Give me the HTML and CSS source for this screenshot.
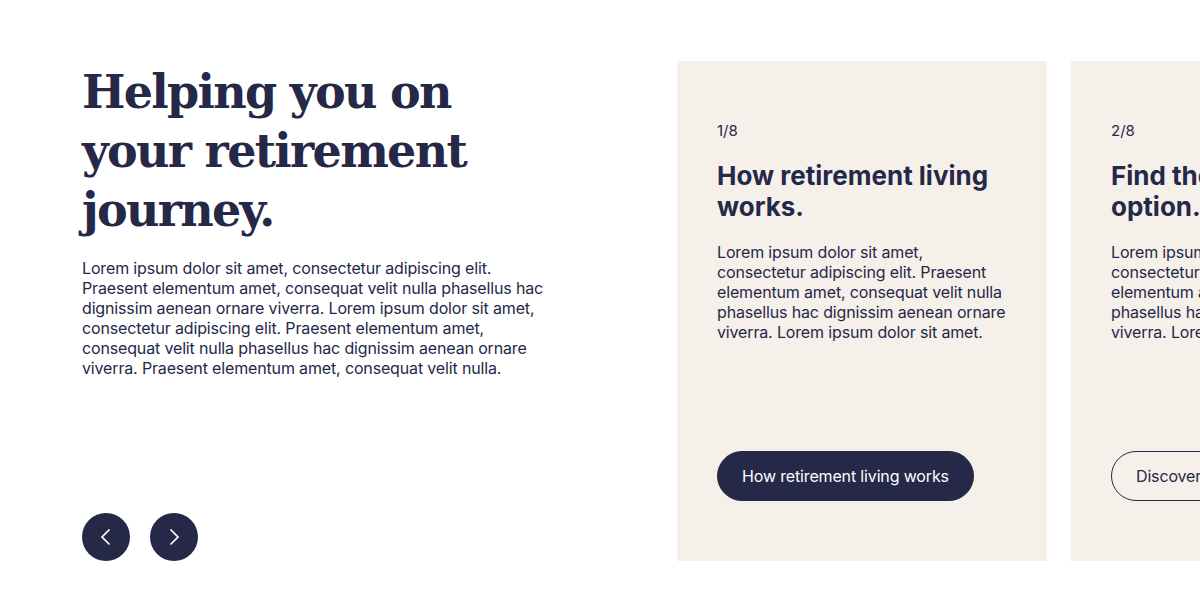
FILE: index.html
```html
<!DOCTYPE html>
<html lang="en">
<head>
  <meta charset="UTF-8" />
  <title>Retirement Journey</title>
  <link rel="stylesheet" href="styles.css">
</head>
<body>

<section class="journey">
  <!-- Intro column -->
  <div class="intro">
    <div>
      <h1>Helping you on your retirement journey.</h1>
      <p class="intro-text">Lorem ipsum dolor sit amet, consectetur adipiscing elit. Praesent elementum amet, consequat velit nulla phasellus hac dignissim aenean ornare viverra. Lorem ipsum dolor sit amet, consectetur adipiscing elit. Praesent elementum amet, consequat velit nulla phasellus hac dignissim aenean ornare viverra. Praesent elementum amet, consequat velit nulla.</p>
    </div>
    <div class="arrows">
      <button class="arrow" aria-label="Previous">
        <svg width="18" height="18" viewBox="0 0 18 18"><path d="M12.5 1.5 L5 9 L12.5 16.5" fill="none" stroke="#fff" stroke-width="1.7"/></svg>
      </button>
      <button class="arrow" aria-label="Next">
        <svg width="18" height="18" viewBox="0 0 18 18"><path d="M5.5 1.5 L13 9 L5.5 16.5" fill="none" stroke="#fff" stroke-width="1.7"/></svg>
      </button>
    </div>
  </div>

  <!-- Slides -->
  <div class="slides">
    <div class="card">
      <div>
        <div class="count">1/8</div>
        <h2>How retirement living works.</h2>
        <p>Lorem ipsum dolor sit amet, consectetur adipiscing elit. Praesent elementum amet, consequat velit nulla phasellus hac dignissim aenean ornare viverra. Lorem ipsum dolor sit amet.</p>
      </div>
      <a class="btn btn-solid" href="#">How retirement living works</a>
    </div>
    <div class="card">
      <div>
        <div class="count">2/8</div>
        <h2>Find the right living option.</h2>
        <p>Lorem ipsum dolor sit amet, consectetur adipiscing elit. Praesent elementum amet, consequat velit nulla phasellus hac dignissim aenean ornare viverra. Lorem ipsum dolor sit amet.</p>
      </div>
      <a class="btn btn-outline" href="#">Discover your options</a>
    </div>
  </div>
</section>

</body>
</html>
```

FILE: styles.css
```css
body {
  margin: 0;
  font-family: Inter, "Noto Sans", sans-serif;
  color: #262848;
  background: #fff;
  overflow: hidden;
}

.journey {
  display: flex;
  padding: 61px 0 0 82px;
  height: 500px;
}

.intro {
  width: 595px;
  flex-shrink: 0;
  display: flex;
  flex-direction: column;
  justify-content: space-between;
}

h1 {
  font-family: "DejaVu Serif", serif;
  font-weight: bold;
  font-size: 46px;
  line-height: 59px;
  letter-spacing: -1.7px;
  margin: 0;
  padding-top: 2px;
  width: 420px;
}

.intro-text {
  font-size: 16px;
  line-height: 20px;
  letter-spacing: -0.15px;
  margin: 18px 0 0;
  width: 470px;
}

.arrows {
  display: flex;
  gap: 20px;
}

.arrow {
  width: 48px;
  height: 48px;
  border-radius: 50%;
  border: none;
  background: #262848;
  display: flex;
  align-items: center;
  justify-content: center;
  padding: 0;
  cursor: pointer;
}

.slides {
  display: flex;
  gap: 24px;
  flex-shrink: 0;
}

.card {
  width: 370px;
  height: 500px;
  box-sizing: border-box;
  padding: 60px 40px 60px;
  background: #f5f0ea;
  display: flex;
  flex-direction: column;
  justify-content: space-between;
  align-items: flex-start;
}

.count {
  font-size: 15px;
  line-height: 20px;
}

h2 {
  font-size: 26px;
  line-height: 31px;
  font-weight: 700;
  margin: 19px 0 0;
}

.card p {
  font-size: 16px;
  line-height: 20px;
  letter-spacing: -0.15px;
  margin: 20px 0 0;
}

.btn {
  display: inline-block;
  height: 50px;
  line-height: 48px;
  box-sizing: border-box;
  padding: 0 24px;
  border-radius: 25px;
  font-size: 16px;
  letter-spacing: -0.15px;
  text-decoration: none;
  border: 1px solid #262848;
}

.btn-solid {
  background: #262848;
  color: #fff;
}

.btn-outline {
  color: #262848;
}
```
